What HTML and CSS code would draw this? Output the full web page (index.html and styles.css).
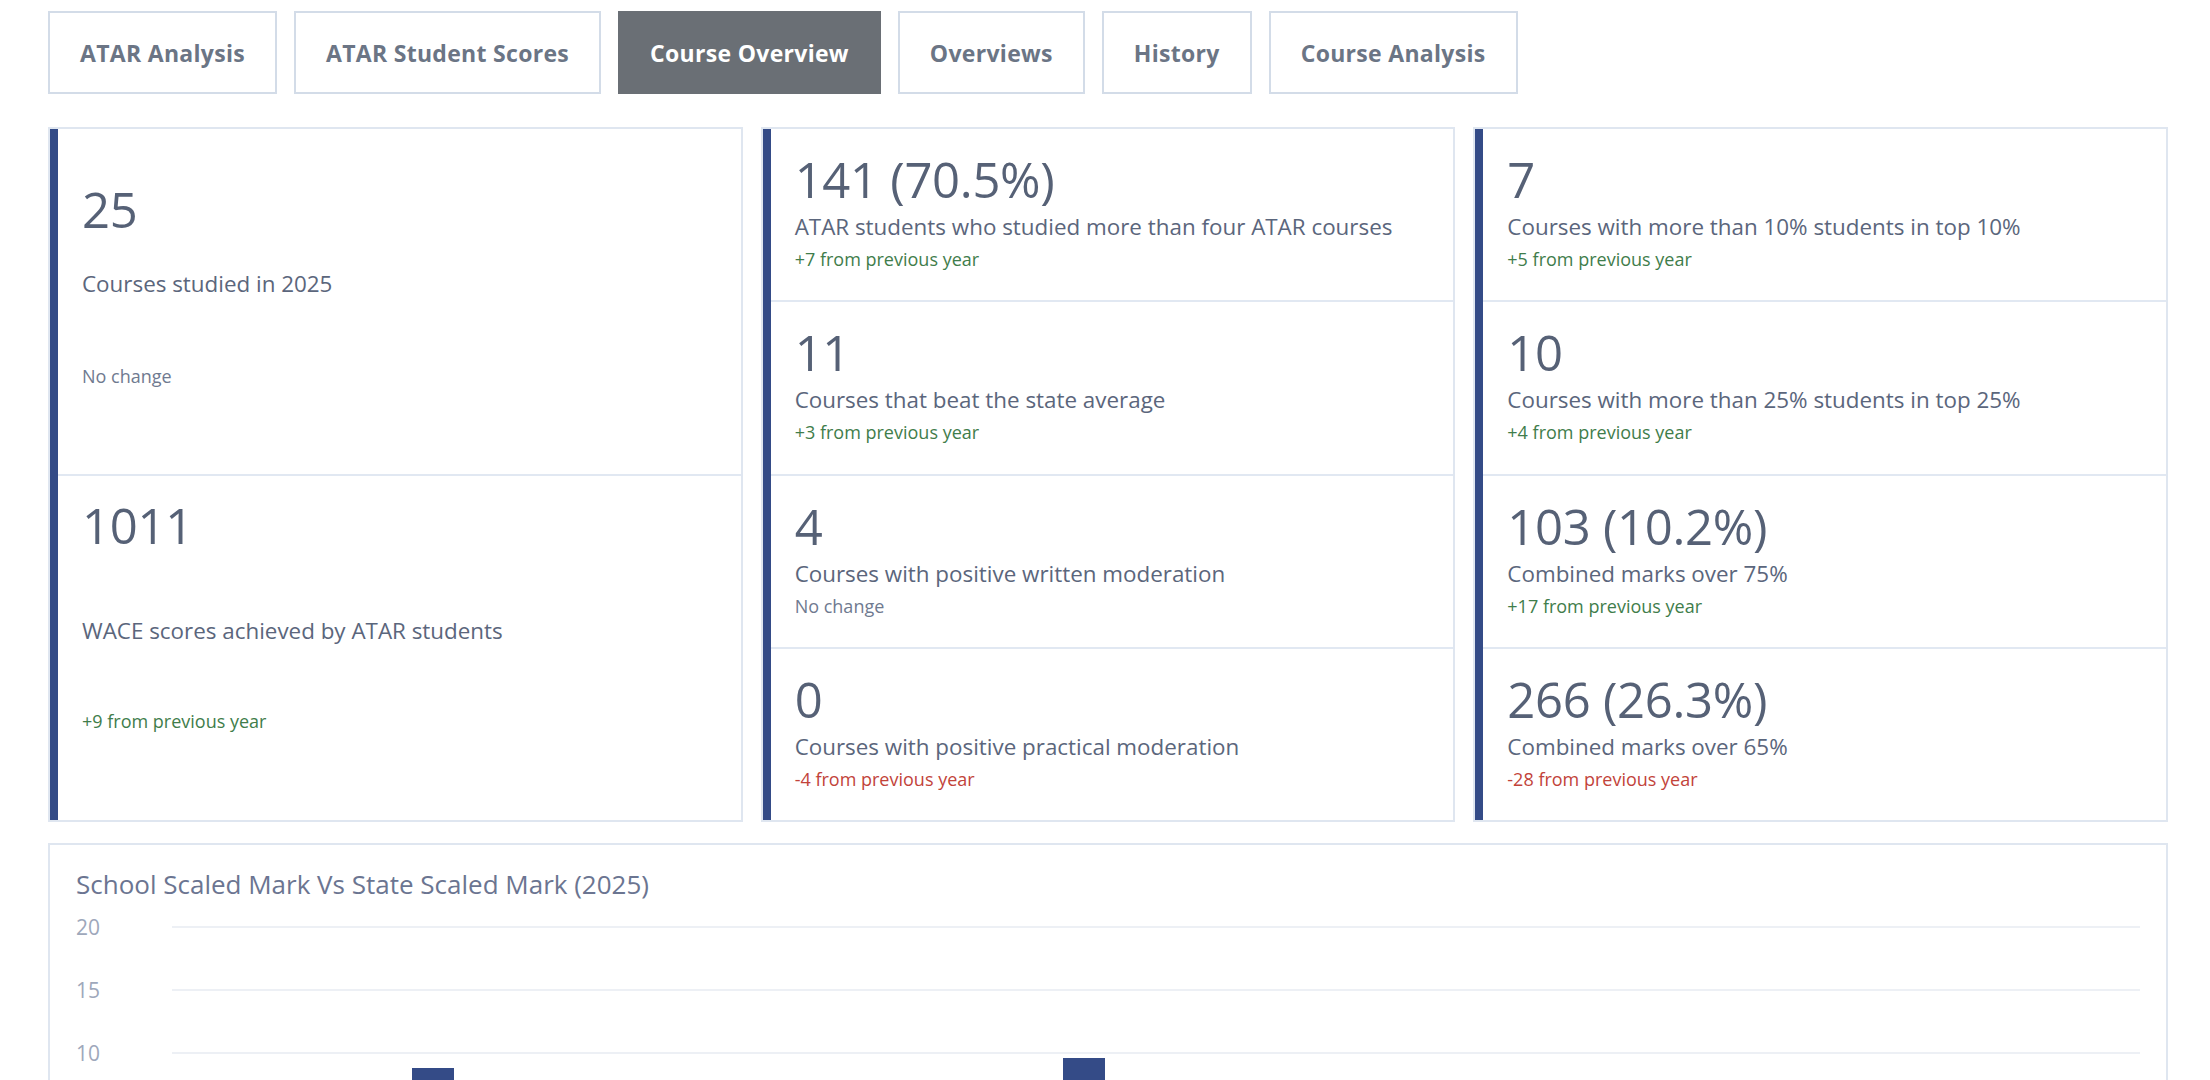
FILE: index.html
```html
<!DOCTYPE html>
<html lang="en">
<head>
<meta charset="utf-8">
<title>Course Overview</title>
<link rel="stylesheet" href="styles.css">
</head>
<body>
<div class="page">
  <nav class="tabs">
    <button class="tab">ATAR Analysis</button>
    <button class="tab">ATAR Student Scores</button>
    <button class="tab tab--active">Course Overview</button>
    <button class="tab">Overviews</button>
    <button class="tab">History</button>
    <button class="tab">Course Analysis</button>
  </nav>

  <section class="stats">
    <div class="card">
      <div class="card__accent"></div>
      <div class="card__cells">
        <div class="cell cell--lead">
          <div class="cell__value">25</div>
          <div class="cell__label">Courses studied in 2025</div>
          <div class="cell__delta flat">No change</div>
        </div>
        <div class="cell cell--wace">
          <div class="cell__value">1011</div>
          <div class="cell__label">WACE scores achieved by ATAR students</div>
          <div class="cell__delta up">+9 from previous year</div>
        </div>
      </div>
    </div>

    <div class="card">
      <div class="card__accent"></div>
      <div class="card__cells">
        <div class="cell">
          <div class="cell__value">141 (70.5%)</div>
          <div class="cell__label">ATAR students who studied more than four ATAR courses</div>
          <div class="cell__delta up">+7 from previous year</div>
        </div>
        <div class="cell">
          <div class="cell__value">11</div>
          <div class="cell__label">Courses that beat the state average</div>
          <div class="cell__delta up">+3 from previous year</div>
        </div>
        <div class="cell">
          <div class="cell__value">4</div>
          <div class="cell__label">Courses with positive written moderation</div>
          <div class="cell__delta flat">No change</div>
        </div>
        <div class="cell">
          <div class="cell__value">0</div>
          <div class="cell__label">Courses with positive practical moderation</div>
          <div class="cell__delta down">-4 from previous year</div>
        </div>
      </div>
    </div>

    <div class="card">
      <div class="card__accent"></div>
      <div class="card__cells">
        <div class="cell">
          <div class="cell__value">7</div>
          <div class="cell__label">Courses with more than 10% students in top 10%</div>
          <div class="cell__delta up">+5 from previous year</div>
        </div>
        <div class="cell">
          <div class="cell__value">10</div>
          <div class="cell__label">Courses with more than 25% students in top 25%</div>
          <div class="cell__delta up">+4 from previous year</div>
        </div>
        <div class="cell">
          <div class="cell__value">103 (10.2%)</div>
          <div class="cell__label">Combined marks over 75%</div>
          <div class="cell__delta up">+17 from previous year</div>
        </div>
        <div class="cell">
          <div class="cell__value">266 (26.3%)</div>
          <div class="cell__label">Combined marks over 65%</div>
          <div class="cell__delta down">-28 from previous year</div>
        </div>
      </div>
    </div>
  </section>

  <section class="chart-card">
    <h2 class="chart-card__title">School Scaled Mark Vs State Scaled Mark (2025)</h2>
    <div class="chart">
      <div class="axis">
        <div class="tick">20</div>
        <div class="tick">15</div>
        <div class="tick">10</div>
      </div>
      <div class="plot">
        <div class="band"></div>
        <div class="band"></div>
        <div class="band"></div>
        <div class="band"></div>
        <div class="band band--last"></div>
        <div class="bar" style="left:240px;height:112px"></div>
        <div class="bar" style="left:891px;height:122px"></div>
      </div>
    </div>
  </section>
</div>
</body>
</html>
```

FILE: styles.css
```css
html, body {
  margin: 0;
  padding: 0;
  height: 100%;
  overflow: hidden;
  background: #ffffff;
}

body {
  font-family: "Open Sans", "Liberation Sans", sans-serif;
  color: #5a6478;
}

.page {
  padding: 11px 42px 0 48px;
}

/* Tabs */
.tabs {
  display: flex;
  gap: 17px;
}

.tab {
  height: 83px;
  box-sizing: border-box;
  padding: 0 30px;
  border: 2px solid #d3dce8;
  background: #ffffff;
  color: #6b7585;
  font-family: "Open Sans", "Liberation Sans", sans-serif;
  font-size: 23px;
  font-weight: 700;
  letter-spacing: 0.3px;
  cursor: pointer;
}

.tab--active {
  background: #6a6f75;
  border-color: #6a6f75;
  color: #ffffff;
}

/* Stats */
.stats {
  margin-top: 33px;
  display: grid;
  grid-template-columns: repeat(3, 1fr);
  gap: 18px;
  height: 695px;
}

.card {
  display: flex;
  border: 2px solid #dfe6f0;
  background: #ffffff;
}

.card__accent {
  width: 8px;
  flex: none;
  background: #344b87;
}

.card__cells {
  flex: 1;
  display: flex;
  flex-direction: column;
}

.cell {
  flex: 1 1 0;
  min-height: 0;
  padding: 23px 24px 0 24px;
  border-top: 2px solid #e1e8f2;
}

.cell:first-child {
  border-top: none;
}

.cell__value {
  font-size: 49px;
  line-height: 54px;
  font-weight: 500;
  color: #566176;
  letter-spacing: -0.3px;
}

.cell__label {
  margin-top: 6px;
  font-size: 22.4px;
  line-height: 30px;
  color: #5b667c;
}

.cell__delta {
  margin-top: 6px;
  font-size: 18px;
  line-height: 23px;
}

.cell__delta.up { color: #3f7d4b; }
.cell__delta.down { color: #c2433a; }
.cell__delta.flat { color: #6f7a90; }

.cell--lead .cell__value { margin-top: 30px; }
.cell--lead .cell__label { margin-top: 33px; }
.cell--lead .cell__delta { margin-top: 66px; }

.cell--wace .cell__value { margin-top: -1px; }
.cell--wace .cell__label { margin-top: 64px; }
.cell--wace .cell__delta { margin-top: 64px; }

/* Chart */
.chart-card {
  margin-top: 21px;
  border: 2px solid #dfe6f0;
  padding: 24px 26px 40px 26px;
  height: 400px;
}

.chart-card__title {
  margin: 0;
  font-size: 26px;
  line-height: 31px;
  font-weight: 500;
  color: #6b7591;
}

.chart {
  margin-top: 26px;
  display: flex;
  align-items: flex-start;
}

.axis {
  width: 96px;
  flex: none;
  padding-top: 1px;
}

.tick {
  height: 63px;
  line-height: 0;
  font-size: 21px;
  color: #9ea8bb;
}

.plot {
  flex: 1;
  position: relative;
}

.band {
  height: 61px;
  border-top: 2px solid #edf0f5;
}

.band--last {
  height: 0;
}

.bar {
  position: absolute;
  bottom: 0;
  width: 42px;
  background: #344b87;
}
```
